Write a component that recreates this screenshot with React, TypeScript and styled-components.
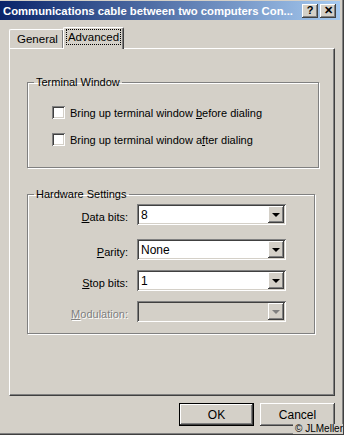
import React from "react";
import styled, { createGlobalStyle } from "styled-components";

const Global = createGlobalStyle`
  html, body { margin: 0; padding: 0; background: #d4d0c8; }
  body { font-family: Tahoma, "Liberation Sans", Arial, sans-serif; font-size: 11px; }
  * { box-sizing: border-box; }
`;

const Window = styled.div`
  position: relative;
  width: 344px;
  height: 435px;
  background: #d4d0c8;
  display: flex;
  flex-direction: column;
  border-right: 1px solid #404040;
  border-bottom: 1px solid #404040;
  box-shadow: inset -1px -1px #808080;
  overflow: hidden;
`;

const TitleBar = styled.div`
  height: 19px;
  margin: 1px 3px 0 0;
  background: linear-gradient(to right, #0a246a, #a6caf0);
  display: flex;
  align-items: center;
  padding: 0 4px 0 3px;
  gap: 2px;
`;

const Title = styled.div`
  flex: 1;
  min-width: 0;
  color: #fff;
  font-weight: bold;
  font-size: 11.3px;
  font-family: "Liberation Sans", Arial, sans-serif;
  white-space: nowrap;
  overflow: hidden;
`;

const CapButton = styled.div`
  flex: none;
  width: 16px;
  height: 14px;
  background: #d4d0c8;
  box-shadow: inset -1px -1px #404040, inset 1px 1px #fff, inset -2px -2px #808080;
  display: flex;
  align-items: center;
  justify-content: center;
  color: #000;
  font-weight: bold;
  font-size: 11px;
  font-family: "Liberation Sans", Arial, sans-serif;
  line-height: 1;
`;

const Body = styled.div`
  flex: 1;
  display: flex;
  flex-direction: column;
  padding: 6px 8px 0 9px;
`;

const TabRow = styled.div`
  display: flex;
  align-items: flex-end;
  height: 22px;
  position: relative;
  z-index: 1;
`;

const Tab = styled.div<{ $active?: boolean }>`
  height: ${(p) => (p.$active ? 22 : 19)}px;
  padding: ${(p) => (p.$active ? "2px 3px 0 3px" : "3px 5px 0 7px")};
  margin: ${(p) => (p.$active ? "0 0 -1px -1px" : "0")};
  background: #d4d0c8;
  border-left: 1px solid #fff;
  border-top: 1px solid #fff;
  border-right: 1px solid #404040;
  border-radius: 2px 2px 0 0;
  box-shadow: inset -1px 0 #808080;
  display: flex;
  align-items: flex-start;
  color: #000;
  font-size: 11.5px;
`;

const Focus = styled.span`
  outline: 1px dotted #000;
  padding: 0 1px;
  line-height: 14px;
`;

const Panel = styled.div`
  width: 326px;
  height: 348px;
  border-left: 1px solid #fff;
  border-top: 1px solid #fff;
  border-right: 1px solid #404040;
  border-bottom: 1px solid #404040;
  box-shadow: inset -1px -1px #808080;
  padding: 27px 0 0 17px;
  display: flex;
  flex-direction: column;
  gap: 20px;
`;

const Group = styled.fieldset<{ $w: number; $h: number }>`
  margin: 0;
  width: ${(p) => p.$w}px;
  height: ${(p) => p.$h}px;
  border: 1px solid #808080;
  box-shadow: inset 1px 1px #fff, 1px 1px #fff;
  padding: 0;
  display: flex;
  flex-direction: column;
`;

const Legend = styled.legend`
  margin-left: 6px;
  padding: 0 2px;
  line-height: 13px;
  color: #000;
  font-size: 11px;
`;

const CheckList = styled.div`
  display: flex;
  flex-direction: column;
  gap: 14px;
  padding: 17px 0 0 24px;
`;

const CheckRow = styled.label`
  display: flex;
  align-items: center;
  gap: 5px;
  color: #000;
  font-size: 11px;
`;

const Box = styled.span`
  width: 13px;
  height: 13px;
  background: #fff;
  box-shadow: inset 1px 1px #808080, inset -1px -1px #fff, inset 2px 2px #404040, inset -2px -2px #d4d0c8;
`;

const U = styled.span`
  text-decoration: underline;
`;

const Rows = styled.div`
  display: grid;
  grid-template-columns: 100px 149px;
  column-gap: 9px;
  padding: 3px 0 0 0;
`;

const Label = styled.div<{ $disabled?: boolean; $top: number }>`
  text-align: right;
  margin-top: ${(p) => p.$top}px;
  height: 21px;
  line-height: 26px;
  font-size: 11px;
  color: ${(p) => (p.$disabled ? "#808080" : "#000")};
  text-shadow: ${(p) => (p.$disabled ? "1px 1px #fff" : "none")};
`;

const Combo = styled.div<{ $disabled?: boolean; $top: number }>`
  margin-top: ${(p) => p.$top}px;
  height: 21px;
  background: ${(p) => (p.$disabled ? "#d4d0c8" : "#fff")};
  box-shadow: inset 1px 1px #808080, inset -1px -1px #fff, inset 2px 2px #404040, inset -2px -2px #d4d0c8;
  display: flex;
  align-items: center;
  padding: 2px;
`;

const ComboText = styled.div`
  flex: 1;
  padding-left: 2px;
  color: #000;
  font-size: 12px;
  font-family: "Liberation Sans", Arial, sans-serif;
`;

const DropBtn = styled.div`
  width: 16px;
  height: 17px;
  background: #d4d0c8;
  box-shadow: inset -1px -1px #404040, inset 1px 1px #fff, inset -2px -2px #808080;
  display: flex;
  align-items: center;
  justify-content: center;
`;

const Arrow = styled.span<{ $disabled?: boolean }>`
  width: 0;
  height: 0;
  border-left: 4px solid transparent;
  border-right: 4px solid transparent;
  border-top: 4px solid ${(p) => (p.$disabled ? "#808080" : "#000")};
  margin-top: 1px;
`;

const ButtonRow = styled.div`
  display: flex;
  justify-content: flex-end;
  gap: 6px;
  padding: 7px 0 0 0;
`;

const Button = styled.div<{ $default?: boolean }>`
  width: 75px;
  height: 23px;
  background: #d4d0c8;
  border: ${(p) => (p.$default ? "1px solid #000" : "none")};
  box-shadow: inset -1px -1px #404040, inset 1px 1px #fff, inset -2px -2px #808080;
  display: flex;
  align-items: center;
  justify-content: center;
  color: #000;
  font-size: 12px;
  font-family: "Liberation Sans", Arial, sans-serif;
`;

const Copyright = styled.div`
  position: absolute;
  right: 0;
  bottom: 0;
  font-size: 10px;
  line-height: 10px;
  font-family: "Liberation Sans", Arial, sans-serif;
  color: #000;
  background: #d4d0c8;
  padding-left: 2px;
`;

const rows = [
  { label: <><U>D</U>ata bits:</>, value: "8", top: 0 },
  { label: <><U>P</U>arity:</>, value: "None", top: 14 },
  { label: <><U>S</U>top bits:</>, value: "1", top: 10 },
  { label: <><U>M</U>odulation:</>, value: "", top: 10, disabled: true },
];

export default function App() {
  return (
    <>
      <Global />
      <Window>
        <TitleBar>
          <Title>Communications cable between two computers Con...</Title>
          <CapButton>?</CapButton>
          <CapButton>✕</CapButton>
        </TitleBar>
        <Body>
          <TabRow>
            <Tab>General</Tab>
            <Tab $active>
              <Focus>Advanced</Focus>
            </Tab>
          </TabRow>
          <Panel>
            <Group $w={292} $h={92}>
              <Legend>Terminal Window</Legend>
              <CheckList>
                <CheckRow>
                  <Box />
                  <span>
                    Bring up terminal window <U>b</U>efore dialing
                  </span>
                </CheckRow>
                <CheckRow>
                  <Box />
                  <span>
                    Bring up terminal window a<U>f</U>ter dialing
                  </span>
                </CheckRow>
              </CheckList>
            </Group>
            <Group $w={288} $h={146}>
              <Legend>Hardware Settings</Legend>
              <Rows>
                {rows.map((r, i) => (
                  <React.Fragment key={i}>
                    <Label $top={r.top} $disabled={r.disabled}>
                      {r.label}
                    </Label>
                    <Combo $top={r.top} $disabled={r.disabled}>
                      <ComboText>{r.value}</ComboText>
                      <DropBtn>
                        <Arrow $disabled={r.disabled} />
                      </DropBtn>
                    </Combo>
                  </React.Fragment>
                ))}
              </Rows>
            </Group>
          </Panel>
          <ButtonRow>
            <Button $default>OK</Button>
            <Button>Cancel</Button>
          </ButtonRow>
        </Body>
        <Copyright>© JLMeller</Copyright>
      </Window>
    </>
  );
}
